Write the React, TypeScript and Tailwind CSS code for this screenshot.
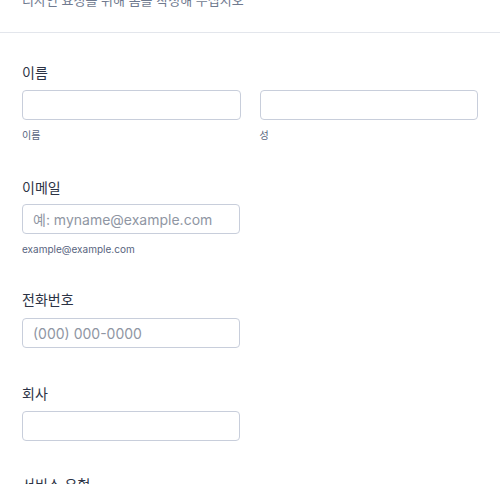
const font = "font-['Inter','Noto_Sans_CJK_KR',sans-serif]"

function Label({ children }: { children: React.ReactNode }) {
  return <div className="text-[14px] leading-[20px] text-[#2c3345]">{children}</div>
}

function Input({ placeholder }: { placeholder?: string }) {
  return (
    <input
      placeholder={placeholder}
      className="block w-full h-[30px] rounded-[4px] border border-[#c8cedb] bg-white px-[10px] text-[14px] text-[#2c3345] placeholder:text-[#8f96a3] outline-none"
    />
  )
}

function Sub({ children }: { children: React.ReactNode }) {
  return <div className="mt-[8px] text-[10px] leading-[14px] text-[#57647e]">{children}</div>
}

export default function App() {
  return (
    <div className={`${font} w-[500px] h-[484px] overflow-hidden bg-white`}>
      <div className="-mt-[10px] pb-[22px] border-b border-[#e3e6ec] px-[22px]">
        <p className="text-[13px] leading-[20px] text-[#6f7a8f]">디자인 요청을 위해 폼을 작성해 주십시오</p>
      </div>

      <div className="px-[22px]">
        <div className="pt-[30px]">
          <Label>이름</Label>
          <div className="mt-[7px] grid grid-cols-2 gap-x-[19px]">
            <div>
              <Input />
              <Sub>이름</Sub>
            </div>
            <div>
              <Input />
              <Sub>성</Sub>
            </div>
          </div>
        </div>

        <div className="pt-[36px] w-[218px]">
          <Label>이메일</Label>
          <div className="mt-[6px]">
            <Input placeholder="예: myname@example.com" />
          </div>
          <Sub>example@example.com</Sub>
        </div>

        <div className="pt-[34px] w-[218px]">
          <Label>전화번호</Label>
          <div className="mt-[8px]">
            <Input placeholder="(000) 000-0000" />
          </div>
        </div>

        <div className="pt-[36px] w-[218px]">
          <Label>회사</Label>
          <div className="mt-[7px]">
            <Input />
          </div>
        </div>

        <div className="pt-[34px]">
          <Label>서비스 유형</Label>
        </div>
      </div>
    </div>
  )
}
